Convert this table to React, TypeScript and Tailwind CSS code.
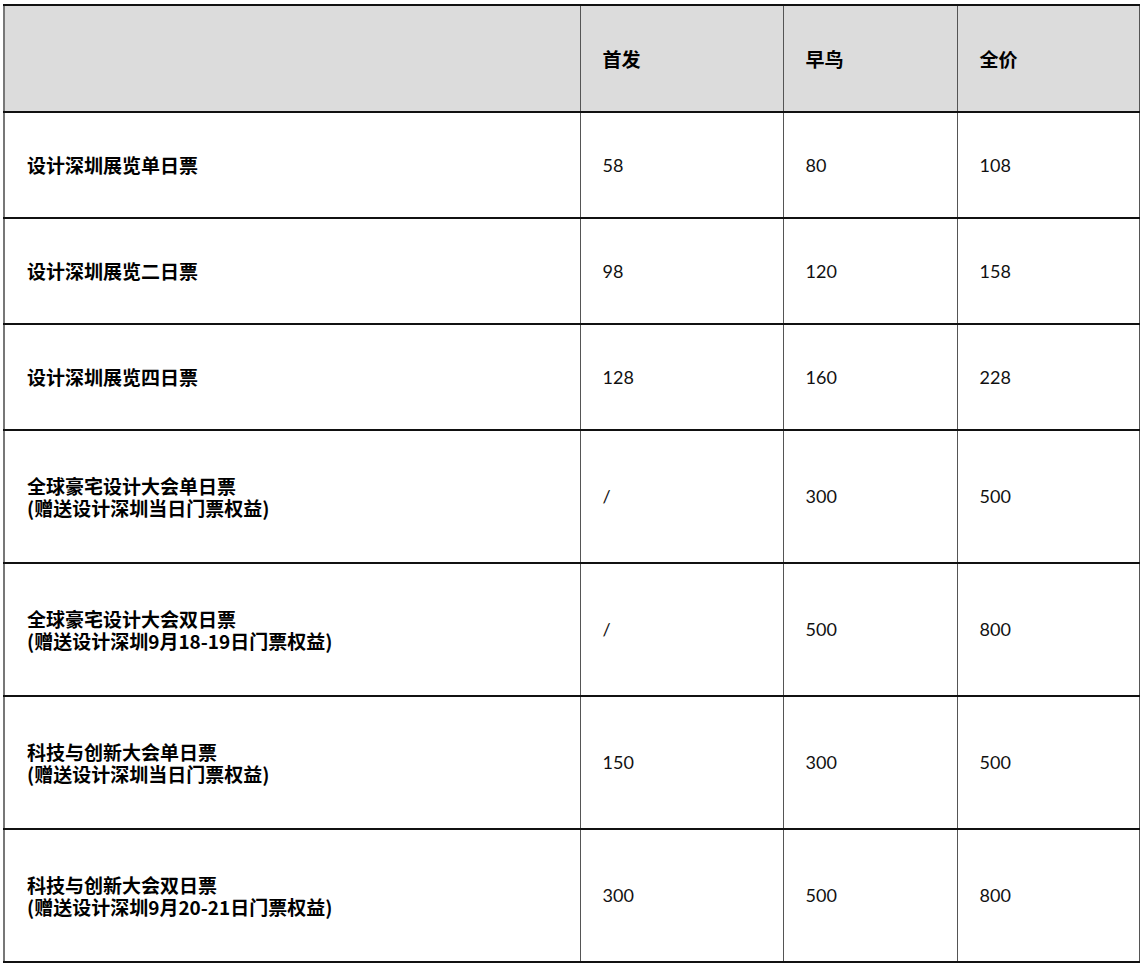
const rows: { name: string[]; a: string; b: string; c: string; tall?: boolean }[] = [
  { name: ["设计深圳展览单日票"], a: "58", b: "80", c: "108" },
  { name: ["设计深圳展览二日票"], a: "98", b: "120", c: "158" },
  { name: ["设计深圳展览四日票"], a: "128", b: "160", c: "228" },
  { name: ["全球豪宅设计大会单日票", "(赠送设计深圳当日门票权益)"], a: "/", b: "300", c: "500", tall: true },
  { name: ["全球豪宅设计大会双日票", "(赠送设计深圳9月18-19日门票权益)"], a: "/", b: "500", c: "800", tall: true },
  { name: ["科技与创新大会单日票", "(赠送设计深圳当日门票权益)"], a: "150", b: "300", c: "500", tall: true },
  { name: ["科技与创新大会双日票", "(赠送设计深圳9月20-21日门票权益)"], a: "300", b: "500", c: "800", tall: true },
];

const cell = "border-y-2 border-y-[#111] border-x border-x-[#555] pl-[22px] align-middle";
const num = "font-['Lato','Liberation_Sans',sans-serif] text-[18px] text-[#111]";
const bold = "font-['Noto_Sans_CJK_SC',sans-serif] font-bold text-[19px] leading-[22px] text-black";

export default function App() {
  return (
    <div className="bg-white w-[1140px] h-[968px] pl-[3px] pt-[4px]">
      <table className="border-collapse table-fixed w-[1135px] border-l-2 border-l-[#777]">
        <colgroup>
          <col className="w-[576px]" />
          <col className="w-[203px]" />
          <col className="w-[174px]" />
          <col className="w-[182px]" />
        </colgroup>
        <thead>
          <tr className="h-[107px] bg-[#dcdcdc]">
            <th className={cell}></th>
            <th className={`${cell} text-left ${bold}`}>首发</th>
            <th className={`${cell} text-left ${bold}`}>早鸟</th>
            <th className={`${cell} text-left ${bold}`}>全价</th>
          </tr>
        </thead>
        <tbody>
          {rows.map((r, i) => (
            <tr key={i} className={r.tall ? "h-[133px]" : "h-[106px]"}>
              <td className={`${cell} ${bold}`}>
                {r.name.map((n, j) => (
                  <div key={j}>{n}</div>
                ))}
              </td>
              <td className={`${cell} ${num}`}>{r.a}</td>
              <td className={`${cell} ${num}`}>{r.b}</td>
              <td className={`${cell} ${num}`}>{r.c}</td>
            </tr>
          ))}
        </tbody>
      </table>
    </div>
  );
}
